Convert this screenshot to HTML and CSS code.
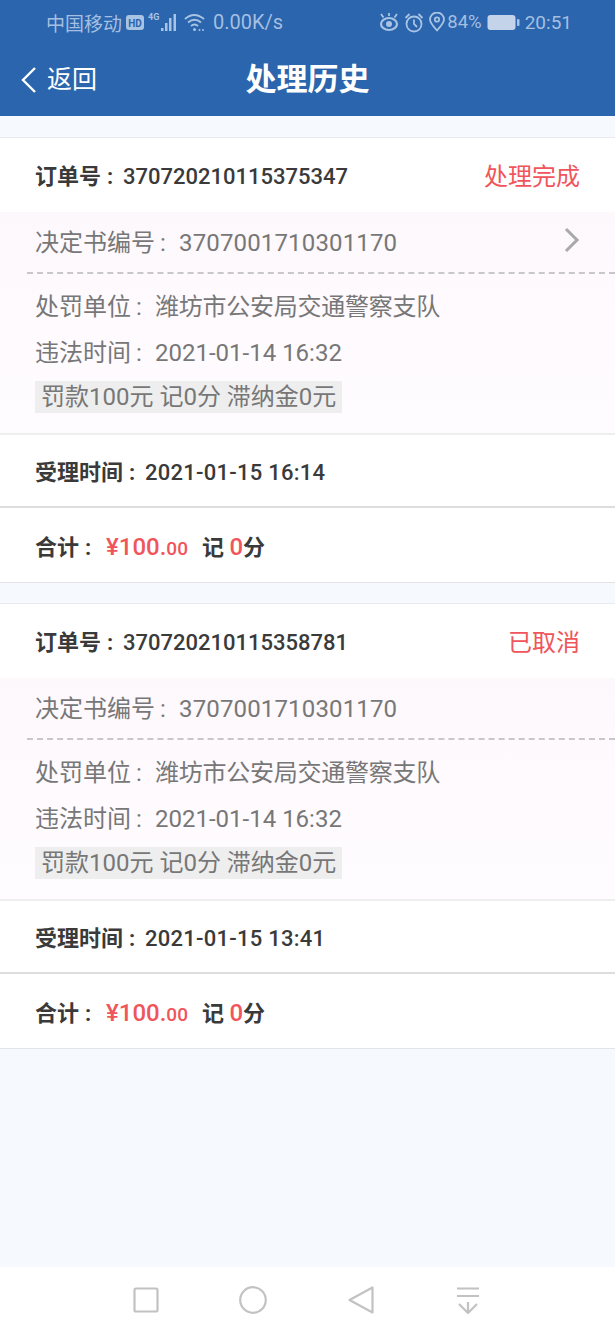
FILE: index.html
```html
<!DOCTYPE html>
<html lang="en">
<head>
    <meta charset="UTF-8">
    <meta name="viewport" content="width=device-width, initial-scale=1.0">
    <title>处理历史</title>
    <link rel="stylesheet" href="styles.css">
</head>
<body>
    <div class="app">
        <header class="header">
            <div class="status">
                <div class="status-left">
                    <span class="carrier">中国移动</span>
                    <svg class="hd" width="18" height="15" viewBox="0 0 18 15"><rect width="18" height="15" rx="3" fill="#a9c3e3"/><text x="9" y="11.500" class="hd-text">HD</text></svg>
                    <svg class="signal" width="31" height="20" viewBox="0 0 31 20"><text x="0" y="8" class="net-text">4G</text><g fill="#a9c3e3"><rect x="13" y="16" width="2.500" height="3"/><rect x="17" y="11" width="2.500" height="8"/><rect x="21" y="6" width="2.500" height="13"/><rect x="25.500" y="2" width="2.500" height="17"/></g></svg>
                    <svg class="wifi" width="21" height="20" viewBox="0 0 21 20" fill="none" stroke="#a9c3e3" stroke-width="2"><path d="M1 7Q10-1 20 7"/><path d="M4 10.500Q10.500 5 17 10.500"/><path d="M7 14Q10.500 11 14 14"/><circle cx="10.500" cy="17.500" r="1.500" fill="#a9c3e3" stroke="none"/><circle cx="15.500" cy="18" r="1" fill="#a9c3e3" stroke="none"/><circle cx="19" cy="18" r="1" fill="#a9c3e3" stroke="none"/></svg>
                    <span class="speed">0.00K/s</span>
                </div>
                <div class="status-right">
                    <svg width="20" height="20" viewBox="0 0 20 20" fill="none" stroke="#a9c3e3" stroke-width="2.200"><ellipse cx="10" cy="12" rx="8" ry="6"/><circle cx="10" cy="12" r="3" fill="#a9c3e3" stroke="none"/><path d="M2 2l2.500 3.500M18 2l-2.500 3.500M10 1v3" stroke-width="1.800"/></svg>
                    <svg width="20" height="21" viewBox="0 0 20 21" fill="none" stroke="#a9c3e3" stroke-width="1.800"><circle cx="10" cy="12" r="7.500"/><path d="M10 7.500V12l3 3M1.500 6L5.500 2M18.500 6L14.500 2"/></svg>
                    <svg width="16" height="20" viewBox="0 0 16 20" fill="none" stroke="#a9c3e3" stroke-width="1.800"><path d="M8 18.500C3 13 1 10 1 7.500a7 7 0 0 1 14 0c0 2.500-2 5.500-7 11z"/><circle cx="8" cy="7.500" r="2.200"/></svg>
                    <span class="battery-text">84%</span>
                    <svg class="battery" width="33" height="17" viewBox="0 0 33 17"><rect x="0.500" y="1" width="28" height="15" rx="3" fill="#c3d3e9"/><rect x="30" y="5" width="2.500" height="7" rx="1" fill="#a9c3e3"/></svg>
                    <span class="clock">20:51</span>
                </div>
            </div>
            <div class="nav">
                <div class="back">
                    <svg width="18" height="28" viewBox="0 0 18 28" fill="none" stroke="#fff" stroke-width="2.400"><path d="M15 2L3 14l12 12"/></svg>
                    <span>返回</span>
                </div>
                <h1 class="title">处理历史</h1>
            </div>
        </header>

        <main class="list">
            <section class="card">
                <div class="row order-row">
                    <span class="strong">订单号<span class="colon">:</span><b class="num">370720210115375347</b></span>
                    <span class="state">处理完成</span>
                </div>
                <div class="detail">
                    <div class="doc-row">
                        <span>决定书编号<span class="colon">:</span><i class="val">3707001710301170</i></span>
                        <svg class="chevron" width="16" height="26" viewBox="0 0 16 26" fill="none" stroke="#a9a9a9" stroke-width="3"><path d="M2 2l11 11L2 24"/></svg>
                    </div>
                    <div class="line">处罚单位<span class="colon">:</span><i class="val cjk">潍坊市公安局交通警察支队</i></div>
                    <div class="line">违法时间<span class="colon">:</span><i class="val">2021-01-14 16:32</i></div>
                    <div class="fine"><span>罚款100元 记0分 滞纳金0元</span></div>
                </div>
                <div class="row accept-row"><span class="strong">受理时间<span class="colon">:</span><b class="num">2021-01-15 16:14</b></span></div>
                <div class="row total-row"><span class="strong">合计<span class="colon">:</span><b class="price amount">¥100.<small>00</small></b><span class="points">记 <b class="price">0</b>分</span></span></div>
            </section>

            <section class="card">
                <div class="row order-row">
                    <span class="strong">订单号<span class="colon">:</span><b class="num">370720210115358781</b></span>
                    <span class="state">已取消</span>
                </div>
                <div class="detail">
                    <div class="doc-row">
                        <span>决定书编号<span class="colon">:</span><i class="val">3707001710301170</i></span>
                    </div>
                    <div class="line">处罚单位<span class="colon">:</span><i class="val cjk">潍坊市公安局交通警察支队</i></div>
                    <div class="line">违法时间<span class="colon">:</span><i class="val">2021-01-14 16:32</i></div>
                    <div class="fine"><span>罚款100元 记0分 滞纳金0元</span></div>
                </div>
                <div class="row accept-row"><span class="strong">受理时间<span class="colon">:</span><b class="num">2021-01-15 13:41</b></span></div>
                <div class="row total-row"><span class="strong">合计<span class="colon">:</span><b class="price amount">¥100.<small>00</small></b><span class="points">记 <b class="price">0</b>分</span></span></div>
            </section>
        </main>

        <footer class="softkeys">
            <svg width="26" height="26" viewBox="0 0 26 26" fill="none" stroke="#c2c2c2" stroke-width="2.200"><rect x="1.500" y="1.500" width="23" height="23" rx="1.500"/></svg>
            <svg width="28" height="28" viewBox="0 0 28 28" fill="none" stroke="#c2c2c2" stroke-width="2.200"><circle cx="14" cy="14" r="12.800"/></svg>
            <svg width="26" height="28" viewBox="0 0 26 28" fill="none" stroke="#c2c2c2" stroke-width="2.200" stroke-linejoin="round"><path d="M24.500 1.500v25L1.500 14z"/></svg>
            <svg width="24" height="27" viewBox="0 0 24 27" fill="none" stroke="#c2c2c2" stroke-width="2.200"><path d="M1 1.500h22M1 9h22M12 15v11M3 17l9 9 9-9"/></svg>
        </footer>
    </div>
</body>
</html>
```

FILE: styles.css
```css
* {
    box-sizing: border-box;
}
body {
    margin: 0;
    font-family: Roboto, "Noto Sans CJK SC", sans-serif;
    background-color: #f6f9fe;
    color: #333;
}
.app {
    display: flex;
    flex-direction: column;
    height: 1333px;
    overflow: hidden;
}
.header {
    height: 116px;
    background-color: #2a65ad;
    color: #fff;
    flex-shrink: 0;
}
.status {
    height: 44px;
    display: flex;
    justify-content: space-between;
    align-items: center;
    padding: 0 43px 0 46px;
    color: #a4bfe1;
    font-size: 19px;
}
.status-left, .status-right {
    display: flex;
    align-items: center;
}
.hd {
    margin-left: 4px;
}
.hd-text {
    font: bold 10px Roboto, sans-serif;
    fill: #2a65ad;
    text-anchor: middle;
}
.net-text {
    font: bold 9px Roboto, sans-serif;
    fill: #a9c3e3;
}
.signal {
    margin-left: 4px;
}
.wifi {
    margin-left: 5px;
}
.speed {
    margin-left: 8px;
    font-size: 20px;
}
.status-right {
    gap: 5px;
}
.status-right .battery-text {
    margin-left: -3px;
    font-size: 18.500px;
}
.nav {
    height: 72px;
    position: relative;
    display: flex;
    align-items: center;
    justify-content: center;
}
.back {
    position: absolute;
    left: 20px;
    top: 20px;
    display: flex;
    align-items: center;
    gap: 9px;
    font-size: 25px;
    line-height: 32px;
}
.title {
    margin: 0;
    font-size: 31px;
    font-weight: 700;
    line-height: 72px;
}
.list {
    flex: 1;
    padding-top: 21px;
    display: flex;
    flex-direction: column;
    gap: 20px;
}
.card {
    background-color: #fff;
    border-top: 1px solid #e8eaee;
    border-bottom: 1px solid #e4e4e6;
}
.row {
    display: flex;
    align-items: center;
    padding: 0 35px;
}
.strong {
    font-weight: 700;
    font-size: 22px;
    color: #3a3a3a;
}
.colon {
    display: inline-block;
    width: 1em;
    padding-left: 5px;
}
.strong .colon {
    padding-left: 6px;
}
.num {
    font-weight: 500;
}
.order-row {
    height: 74px;
    padding-bottom: 2px;
    justify-content: space-between;
}
.state {
    font-size: 24px;
    color: #f0555b;
}
.detail {
    height: 223px;
    padding-left: 35px;
    font-size: 24px;
    color: #777;
    background: linear-gradient(#fdf8fc, #fffcff);
    border-bottom: 2px solid #eee;
}
.val {
    font-style: normal;
}
.val.cjk {
    letter-spacing: -0.25px;
}
.doc-row {
    height: 62px;
    padding: 0 35px 4px 8px;
    margin-left: -8px;
    display: flex;
    justify-content: space-between;
    align-items: center;
    border-bottom: 2px dashed #c8c8c8;
}
.doc-row .val {
    letter-spacing: 0.15px;
}
.line {
    height: 46px;
    line-height: 46px;
}
.doc-row + .line {
    margin-top: 10px;
}
.fine {
    margin-top: 5px;
}
.fine span {
    display: inline-block;
    height: 32px;
    line-height: 32px;
    padding: 0 6px;
    background-color: #eee;
}
.accept-row {
    height: 73px;
    padding-bottom: 2px;
    border-bottom: 2px solid #ddd;
}
.accept-row .num {
    letter-spacing: 0.25px;
}
.total-row {
    height: 74px;
}
.price {
    color: #f0555b;
    font-size: 24px;
    font-weight: 500;
}
.price.amount {
    margin-left: 5px;
}
.price small {
    font-size: 19px;
}
.points {
    margin-left: 14px;
}
.softkeys {
    height: 66px;
    flex-shrink: 0;
    background-color: #fff;
    display: grid;
    grid-template-columns: repeat(4, 107.500px);
    justify-items: center;
    align-items: center;
    padding-left: 92px;
}
```
